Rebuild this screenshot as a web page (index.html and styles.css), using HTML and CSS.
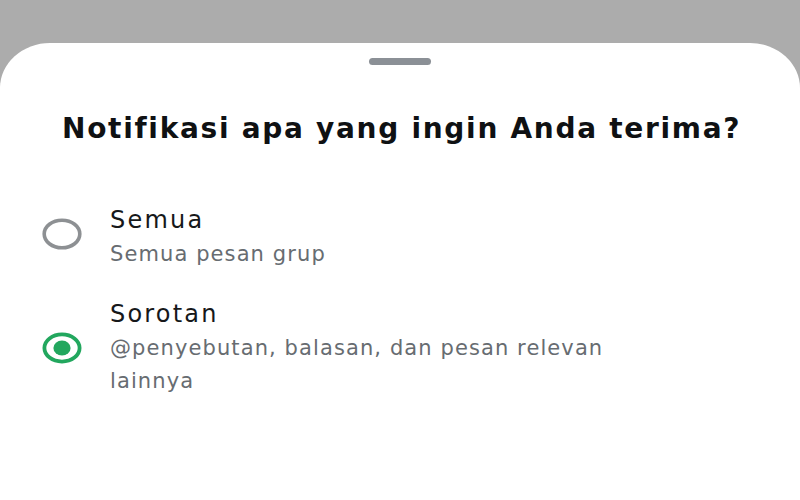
FILE: index.html
```html
<!DOCTYPE html>
<html lang="id">
<head>
<meta charset="utf-8">
<title>Notifikasi</title>
<link rel="stylesheet" href="styles.css">
</head>
<body>
<div class="sheet">
  <div class="handle"></div>
  <h1 class="title">Notifikasi apa yang ingin Anda terima?</h1>
  <div class="options">
    <div class="option option-first">
      <svg class="radio" viewBox="0 0 40 32" width="40" height="32">
        <ellipse cx="20" cy="16" rx="17.8" ry="13.8" fill="none" stroke="#8d9093" stroke-width="3.6"/>
      </svg>
      <div class="texts">
        <div class="label">Semua</div>
        <div class="desc">Semua pesan grup</div>
      </div>
    </div>
    <div class="option">
      <svg class="radio" viewBox="0 0 40 32" width="40" height="32">
        <ellipse cx="20" cy="16" rx="17.6" ry="13.6" fill="none" stroke="#22a75e" stroke-width="3.8"/>
        <ellipse cx="20" cy="16" rx="8.6" ry="7.6" fill="#22a75e"/>
      </svg>
      <div class="texts">
        <div class="label">Sorotan</div>
        <div class="desc">@penyebutan, balasan, dan pesan relevan<br>lainnya</div>
      </div>
    </div>
  </div>
</div>
</body>
</html>
```
FILE: styles.css
```css
html, body {
  margin: 0;
  padding: 0;
}
body {
  background: #acacac;
  width: 800px;
  height: 500px;
  overflow: hidden;
  font-family: "DejaVu Sans", "Liberation Sans", sans-serif;
}
.sheet {
  margin-top: 43px;
  height: 457px;
  background: #ffffff;
  border-radius: 50px 50px 0 0 / 45px 45px 0 0;
  display: flex;
  flex-direction: column;
  align-items: stretch;
}
.handle {
  align-self: center;
  width: 62px;
  height: 7px;
  border-radius: 4px;
  background: #8b9096;
  margin-top: 15px;
}
.title {
  margin: 47px 0 0 62px;
  font-size: 28px;
  font-weight: bold;
  color: #0f1113;
  letter-spacing: 1.7px;
  line-height: 34px;
  white-space: nowrap;
}
.options {
  margin-top: 57px;
  display: flex;
  flex-direction: column;
  gap: 26px;
}
.option {
  display: flex;
  align-items: center;
  padding-left: 42px;
}
.option-first .radio {
  margin-bottom: 6px;
}
.radio {
  flex: none;
  width: 40px;
  height: 32px;
}
.texts {
  margin-left: 28px;
  display: flex;
  flex-direction: column;
}
.label {
  font-size: 24px;
  line-height: 35px;
  color: #16181a;
  letter-spacing: 2.2px;
}
.desc {
  font-size: 21px;
  line-height: 33px;
  color: #676c71;
  letter-spacing: 1.1px;
}
```
